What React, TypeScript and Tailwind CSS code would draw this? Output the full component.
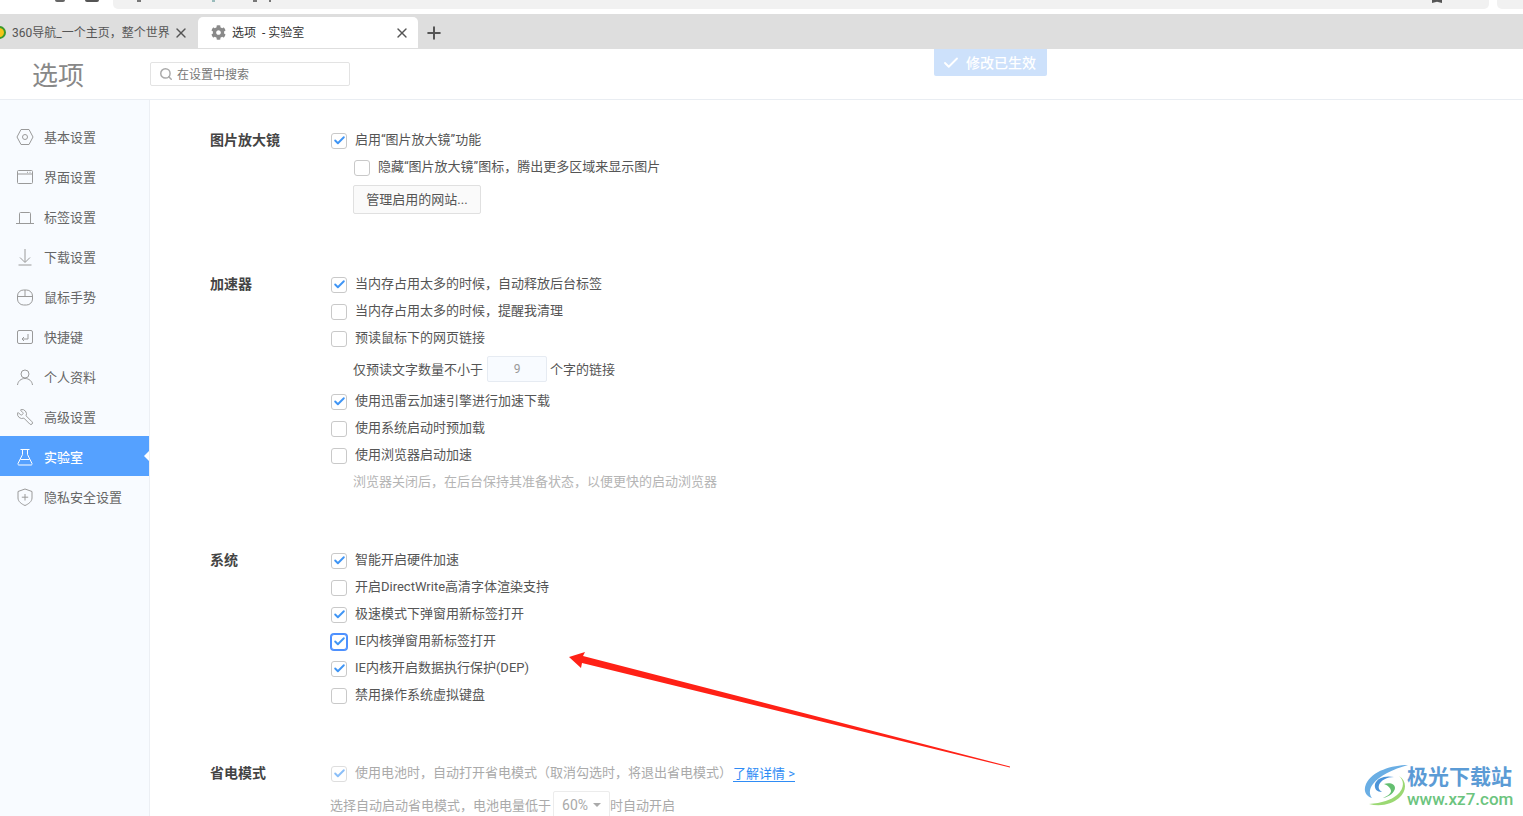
import { Check, Plus, Search, Wrench, X } from "lucide-react";
import { FaCog } from "react-icons/fa";

const font = { fontFamily: 'Roboto, "Noto Sans CJK SC", sans-serif' };

function NavIcon({ name, active }: { name: string; active?: boolean }) {
  const c = active ? "#ffffff" : "#9a9a9a";
  if (name === "wrench") {
    return <Wrench size={18} strokeWidth={1.300} className="mt-[2px] shrink-0 -scale-x-100 text-[#9a9a9a]" />;
  }
  return (
    <svg width="18" height="18" viewBox="0 0 18 18" fill="none" stroke={c} strokeWidth="1" className="mt-[2px] shrink-0">
      {name === "basic" && (
        <>
          <path d="M5 1.5h8L17 9l-4 7.5H5L1 9z" />
          <circle cx="9" cy="9" r="2.5" />
        </>
      )}
      {name === "ui" && (
        <>
          <rect x="1.5" y="2.5" width="15" height="13" rx="1" />
          <path d="M1.5 6h15M11 4.3h1M13.500 4.300h1" />
        </>
      )}
      {name === "tab" && <path d="M0 15.500h18M3.500 15.500V5.500a1 1 0 0 1 1-1h9a1 1 0 0 1 1 1v10" />}
      {name === "download" && <path d="M9 1v13M4 9.500L9 14.500l5-5M2.500 17h13" />}
      {name === "mouse" && (
        <>
          <rect x="1.500" y="2" width="15" height="15" rx="6" />
          <path d="M1.500 8.500h15M9 2v6.500" />
        </>
      )}
      {name === "key" && (
        <>
          <rect x="1.500" y="2.500" width="15" height="13" rx="1.500" />
          <path d="M12 6v5H6M8 9l-2 2 2 2" />
        </>
      )}
      {name === "user" && (
        <>
          <circle cx="9" cy="6" r="4" />
          <path d="M1.500 17c.5-4 3.500-6.500 7.500-6.500s7 2.500 7.500 6.500" />
        </>
      )}
      {name === "lab" && <path d="M4.500 1.500h9M6.500 1.500v5L2 15.500c-.3.700 0 1.500 1 1.500h12c1 0 1.300-.8 1-1.500L11.500 6.500v-5M4.500 11.500h9" />}
      {name === "shield" && (
        <>
          <path d="M9 1l7 2.500V10c0 3.500-3.500 6-7 7.500C5.500 16 2 13.500 2 10V3.500z" />
          <path d="M9 6v6.500M5.800 9.200h6.400" />
        </>
      )}
    </svg>
  );
}

const navItems = [
  ["basic", "基本设置"],
  ["ui", "界面设置"],
  ["tab", "标签设置"],
  ["download", "下载设置"],
  ["mouse", "鼠标手势"],
  ["key", "快捷键"],
  ["user", "个人资料"],
  ["wrench", "高级设置"],
  ["lab", "实验室"],
  ["shield", "隐私安全设置"],
];

function Box({ checked, focus, dim }: { checked?: boolean; focus?: boolean; dim?: boolean }) {
  return (
    <span
      className={`flex h-4 w-4 shrink-0 items-center justify-center rounded-[3px] border bg-white ${
        focus ? "border-[#4d90fe] shadow-[0_0_0_1px_#4d90fe]" : "border-[#c9c9c9]"
      } ${dim ? "opacity-60" : ""}`}
    >
      {checked && <Check size={13} strokeWidth={3.5} className="text-[#3f95f5]" />}
    </span>
  );
}

function Row({ label, checked, focus, indent }: { label: string; checked?: boolean; focus?: boolean; indent?: boolean }) {
  return (
    <div className={`flex h-[27px] items-center gap-2 ${indent ? "ml-[23px]" : ""}`}>
      <Box checked={checked} focus={focus} />
      <span className="mb-[2px] text-[13px] text-[#555]">{label}</span>
    </div>
  );
}

function Section({ title, className, children }: { title: string; className: string; children: React.ReactNode }) {
  return (
    <section className={`flex ${className}`}>
      <h3 className="flex h-[25px] w-[121px] shrink-0 items-center text-sm font-bold text-[#444]">{title}</h3>
      <div className="flex flex-col">{children}</div>
    </section>
  );
}

function Logo() {
  return (
    <svg width="44" height="42" viewBox="0 0 44 42" fill="none">
      <path d="M44 1C28 1 8 7 2 20c-3 7 0 12 6 14-3-4-3-9 1-14C15 12 29 5 44 1z" fill="#6aaee4" />
      <path d="M30 13c-9-2-17 1-19 7-1 5 2 8 7 8-3-2-4-4-3-7 2-5 8-8 15-8z" fill="#4a93d8" />
      <path d="M35 12c6 5 5 13-2 19-6 5-15 8-28 9 12 3 23 0 30-6 8-7 8-17 0-22z" fill="#9bd873" />
      <path d="M20 20c6-2 11 0 11 4s-6 9-12 10c4-2 8-4 8-7 0-3-4-6-7-7z" fill="#64bf70" />
    </svg>
  );
}

export default function App() {
  return (
    <div className="relative flex h-[816px] w-[1523px] flex-col overflow-hidden bg-white" style={font}>
      {/* browser top, cut off by the screenshot */}
      <div className="flex h-[14px] shrink-0 items-start">
        <div className="flex w-[113px] pl-[55px]">
          <span className="h-[2px] w-[10px] rounded-b bg-[#666]" />
          <span className="ml-[20px] h-[2px] w-[14px] rounded-b bg-[#555]" />
        </div>
        <div className="flex h-[9px] w-[1376px] items-start rounded-b-[5px] bg-[#f1f1f1] pl-[24px]">
          <span className="h-[2px] w-1 bg-[#777]" />
          <span className="ml-[71px] h-[2px] w-[3px] bg-[#9bb]" />
          <span className="ml-[38px] h-[2px] w-1 bg-[#777]" />
          <span className="ml-[12px] h-[2px] w-[2px] bg-[#777]" />
          <span className="ml-auto mr-[47px] h-[3px] w-[10px] bg-[#555] [clip-path:polygon(0_0,100%_0,100%_100%,50%_60%,0_100%)]" />
        </div>
        <div className="ml-2 h-[9px] flex-1 rounded-bl-[5px] bg-[#f1f1f1]" />
      </div>

      {/* tabs */}
      <div className="flex h-[35px] shrink-0 items-end bg-[#dedede] pb-px">
        <div className="flex h-[31px] w-[198px] shrink-0 items-center">
          <span className="ml-[-7px] h-[13px] w-[13px] shrink-0 rounded-full border-2 border-[#3c9a2c] bg-[#f5c518]" />
          <span className="ml-[6px] whitespace-nowrap text-xs text-[#555]">360导航_一个主页，整个世界</span>
          <X size={16} className="ml-[3px] shrink-0 text-[#555]" />
        </div>
        <div className="flex h-[31px] w-[220px] shrink-0 items-center rounded-t-[5px] bg-white pl-[13px] pr-[8px]">
          <FaCog size={15} className="shrink-0 text-[#8a8a8a]" />
          <span className="ml-[6px] flex-1 text-xs text-[#333]">选项&nbsp; - 实验室</span>
          <X size={16} className="text-[#555]" />
        </div>
        <Plus size={20} strokeWidth={2.400} className="mb-[5px] ml-[6px] text-[#555]" />
      </div>

      {/* header */}
      <header className="flex h-[51px] shrink-0 items-center border-b border-[#e9edf2] pl-[32px]">
        <h1 className="mt-[3px] w-[118px] text-[26px] leading-none font-normal text-[#888]">选项</h1>
        <div className="flex h-6 w-[200px] items-center gap-1 rounded-[2px] border border-[#e3e3e3] pl-2">
          <Search size={14} strokeWidth={2.500} className="shrink-0 text-[#aaa]" />
          <span className="mt-px text-xs text-[#777]">在设置中搜索</span>
        </div>
      </header>

      <div className="flex min-h-0 flex-1">
        {/* sidebar */}
        <nav className="w-[150px] shrink-0 border-r border-[#eceff4] bg-[#f8fbff] pt-4">
          {navItems.map(([icon, label]) => {
            const active = label === "实验室";
            return (
              <div
                key={label}
                className={`relative flex h-10 items-center gap-[10px] pl-4 text-[13px] ${
                  active ? "bg-[#55a1ff] font-medium text-white" : "text-[#666]"
                }`}
              >
                <NavIcon name={icon} active={active} />
                <span className="mt-1">{label}</span>
                {active && (
                  <span className="absolute right-0 h-0 w-0 border-y-[5px] border-r-[5px] border-y-transparent border-r-white" />
                )}
              </div>
            );
          })}
        </nav>

        {/* content */}
        <main className="min-w-0 flex-1 pt-[27px] pl-[60px]">
          <Section title="图片放大镜" className="h-[144px]">
            <Row label="启用“图片放大镜”功能" checked />
            <Row label="隐藏“图片放大镜”图标，腾出更多区域来显示图片" indent />
            <button className="mt-1 ml-[22px] h-[29px] w-[128px] rounded-[2px] border border-[#e0e0e0] bg-[#fafafa] text-[13px] text-[#555]">
              管理启用的网站...
            </button>
          </Section>

          <Section title="加速器" className="h-[276px]">
            <Row label="当内存占用太多的时候，自动释放后台标签" checked />
            <Row label="当内存占用太多的时候，提醒我清理" />
            <Row label="预读鼠标下的网页链接" />
            <div className="mt-[3px] mb-[6px] ml-[22px] flex h-[27px] items-center text-[13px] text-[#555]">
              <span className="mt-[2px]">仅预读文字数量不小于</span>
              <span className="mr-[3px] ml-1 flex h-[26px] w-[60px] items-center justify-center rounded-[2px] border border-[#e6ebf2] bg-[#f8fbff] text-xs text-[#999]">
                9
              </span>
              <span className="mt-[2px]">个字的链接</span>
            </div>
            <Row label="使用迅雷云加速引擎进行加速下载" checked />
            <Row label="使用系统启动时预加载" />
            <Row label="使用浏览器启动加速" />
            <p className="ml-[22px] flex h-[25px] items-center text-[13px] text-[#b5b5b5]">
              浏览器关闭后，在后台保持其准备状态，以便更快的启动浏览器
            </p>
          </Section>

          <Section title="系统" className="h-[213px]">
            <Row label="智能开启硬件加速" checked />
            <Row label="开启DirectWrite高清字体渲染支持" />
            <Row label="极速模式下弹窗用新标签打开" checked />
            <Row label="IE内核弹窗用新标签打开" checked focus />
            <Row label="IE内核开启数据执行保护(DEP)" checked />
            <Row label="禁用操作系统虚拟键盘" />
          </Section>

          <Section title="省电模式" className="h-[60px]">
            <div className="flex h-[27px] items-center gap-2 whitespace-nowrap">
              <Box checked dim />
              <span className="mb-[2px] text-[13px] text-[#aaa]">使用电池时，自动打开省电模式（取消勾选时，将退出省电模式）</span>
              <a className="ml-[-7px] border-b border-[#2f8cf5] text-[13px] leading-[15px] text-[#2f8cf5]">了解详情 &gt;</a>
            </div>
            <div className="mt-[4px] ml-[-1px] flex h-[27px] items-center whitespace-nowrap text-[13px] text-[#aaa]">
              <span className="mt-[3px]">选择自动启动省电模式，电池电量低于</span>
              <span className="mr-0 ml-[2px] flex h-[28px] w-[57px] items-center justify-between rounded-[2px] border border-[#ececec] px-2 text-sm">
                60%
                <span className="h-0 w-0 border-x-[4px] border-t-[4px] border-x-transparent border-t-[#aaa]" />
              </span>
              <span className="mt-[3px]">时自动开启</span>
            </div>
          </Section>
        </main>
      </div>

      {/* saved toast */}
      <div className="absolute top-[49px] left-[934px] flex h-[27px] w-[113px] items-center gap-[6px] rounded-b-[2px] bg-[#cde1fb] pl-[8px] text-sm font-medium text-white">
        <Check size={18} strokeWidth={2.500} className="shrink-0" />
        <span>修改已生效</span>
      </div>

      {/* annotation arrow */}
      <svg className="pointer-events-none absolute top-[640px] left-[560px]" width="460" height="140" viewBox="0 0 460 140">
        <path d="M9 17L25 12 23 16 450 126.500 450 127.500 22 23 21 28z" fill="#ff2116" />
      </svg>

      {/* watermark */}
      <div className="absolute top-[764px] left-[1364px] flex items-start">
        <Logo />
        <div className="-ml-[1px] flex flex-col">
          <span className="text-[21px] leading-[26px] font-bold whitespace-nowrap text-[#5b9bd5]">极光下载站</span>
          <span className="text-[17px] leading-[19px] font-medium text-[#6cc47e]">www.xz7.com</span>
        </div>
      </div>
    </div>
  );
}
